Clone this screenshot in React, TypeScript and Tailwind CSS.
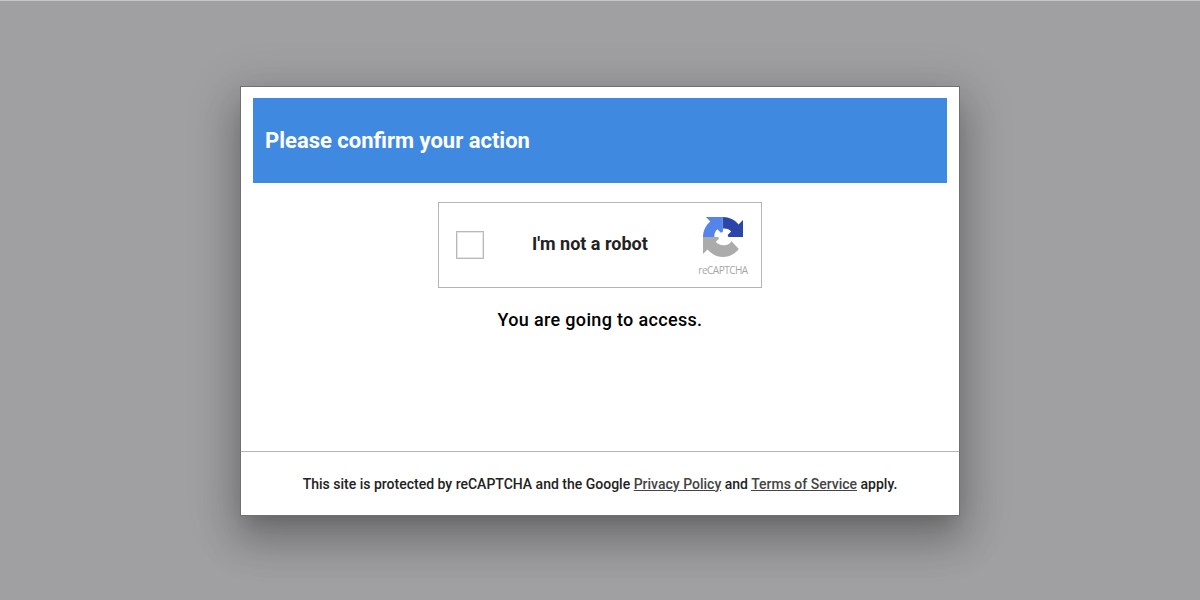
import React, { useState } from 'react';

function CaptchaLogo() {
  return (
    <svg className="w-10 h-10" viewBox="0 0 64 64" aria-hidden="true">
      <path
        fill="#2b45a8"
        d="M64 31.955V4.687l-7.16 7.16C50.948 4.674 42.033.093 32.05.093V18.4c5.8-.6 10.4 1.2 13 4.6l-5.6 5.6 1.2 3.355H64"
      />
      <path
        fill="#5585ea"
        d="M31.862.094H4.594l7.16 7.16C4.58 13.147 0 22.06 0 32.046h18.2c-.4-5.4 1.3-9.6 4.8-12.4l5.6 5.4 3.262-1.4V.094"
      />
      <path
        fill="#ababab"
        d="M0 32.045v27.268l7.16-7.16c5.86 7.173 14.774 11.754 24.76 11.754 10.4 0 19.622-4.96 25.458-12.64l-11.736-12.4c-1.2 1.8-2.6 3.2-4.2 4.2-2.4 1.5-5.4 2.1-8.6 2.1-5 0-9.5-1.9-12.4-5.5l5.2-4.9-1.4-2.722H0"
      />
    </svg>
  );
}

function App() {
  const [checked, setChecked] = useState(false);

  return (
    <main className="flex justify-center items-start bg-[#a0a0a2] pt-[85px] border-[#c6c6c6] border-t h-screen overflow-hidden font-['Roboto',sans-serif]">
      <div
        role="dialog"
        className="flex flex-col bg-white border border-[#707070] w-[720px] h-[430px] shadow-[0_9px_46px_8px_rgba(0,0,0,0.14),0_11px_15px_-7px_rgba(0,0,0,0.12),0_24px_38px_3px_rgba(0,0,0,0.2)]"
      >
        <h1 className="flex items-center bg-[#3f8ae0] mx-3 mt-[11px] px-3 h-[85px] font-bold text-[22px] text-white shrink-0">
          Please confirm your action
        </h1>

        <div className="flex flex-col items-center pt-[19px] grow">
          {/* captcha box */}
          <div className="flex items-center border border-[#b5b5b5] w-[324px] h-[86px]">
            <button
              type="button"
              role="checkbox"
              aria-checked={checked}
              aria-label="I'm not a robot"
              onClick={() => setChecked(!checked)}
              className="ml-[17px] border border-[#b8b8b8] w-7 h-7 shrink-0 shadow-[inset_0_0_0_1px_#e6e6e6]"
            />
            <span className="ml-[48px] pb-[3px] w-[117px] font-bold text-[#222] text-[18px] whitespace-nowrap">
              I&apos;m not a robot
            </span>
            <div className="flex flex-col items-center ml-[49px] pt-[3px] w-[50px]">
              <CaptchaLogo />
              <span className="mt-[6px] font-['Open_Sans',sans-serif] text-[#a6a6a6] text-[10px] leading-[14px] tracking-[-0.5px]">
                reCAPTCHA
              </span>
            </div>
          </div>

          <p className="mt-[18px] font-medium text-[18px] text-black tracking-[0.33px]">
            You are going to access.
          </p>
        </div>

        <div className="flex justify-center items-center border-[#b5b5b5] border-t h-[64px] shrink-0">
          <p className="pt-px font-medium text-[#222] text-[14px]">
            This site is protected by reCAPTCHA and the Google{' '}
            <a href="#privacy" className="text-[#444] underline">
              Privacy Policy
            </a>{' '}
            and{' '}
            <a href="#terms" className="text-[#444] underline">
              Terms of Service
            </a>{' '}
            apply.
          </p>
        </div>
      </div>
    </main>
  );
}

export default App;
